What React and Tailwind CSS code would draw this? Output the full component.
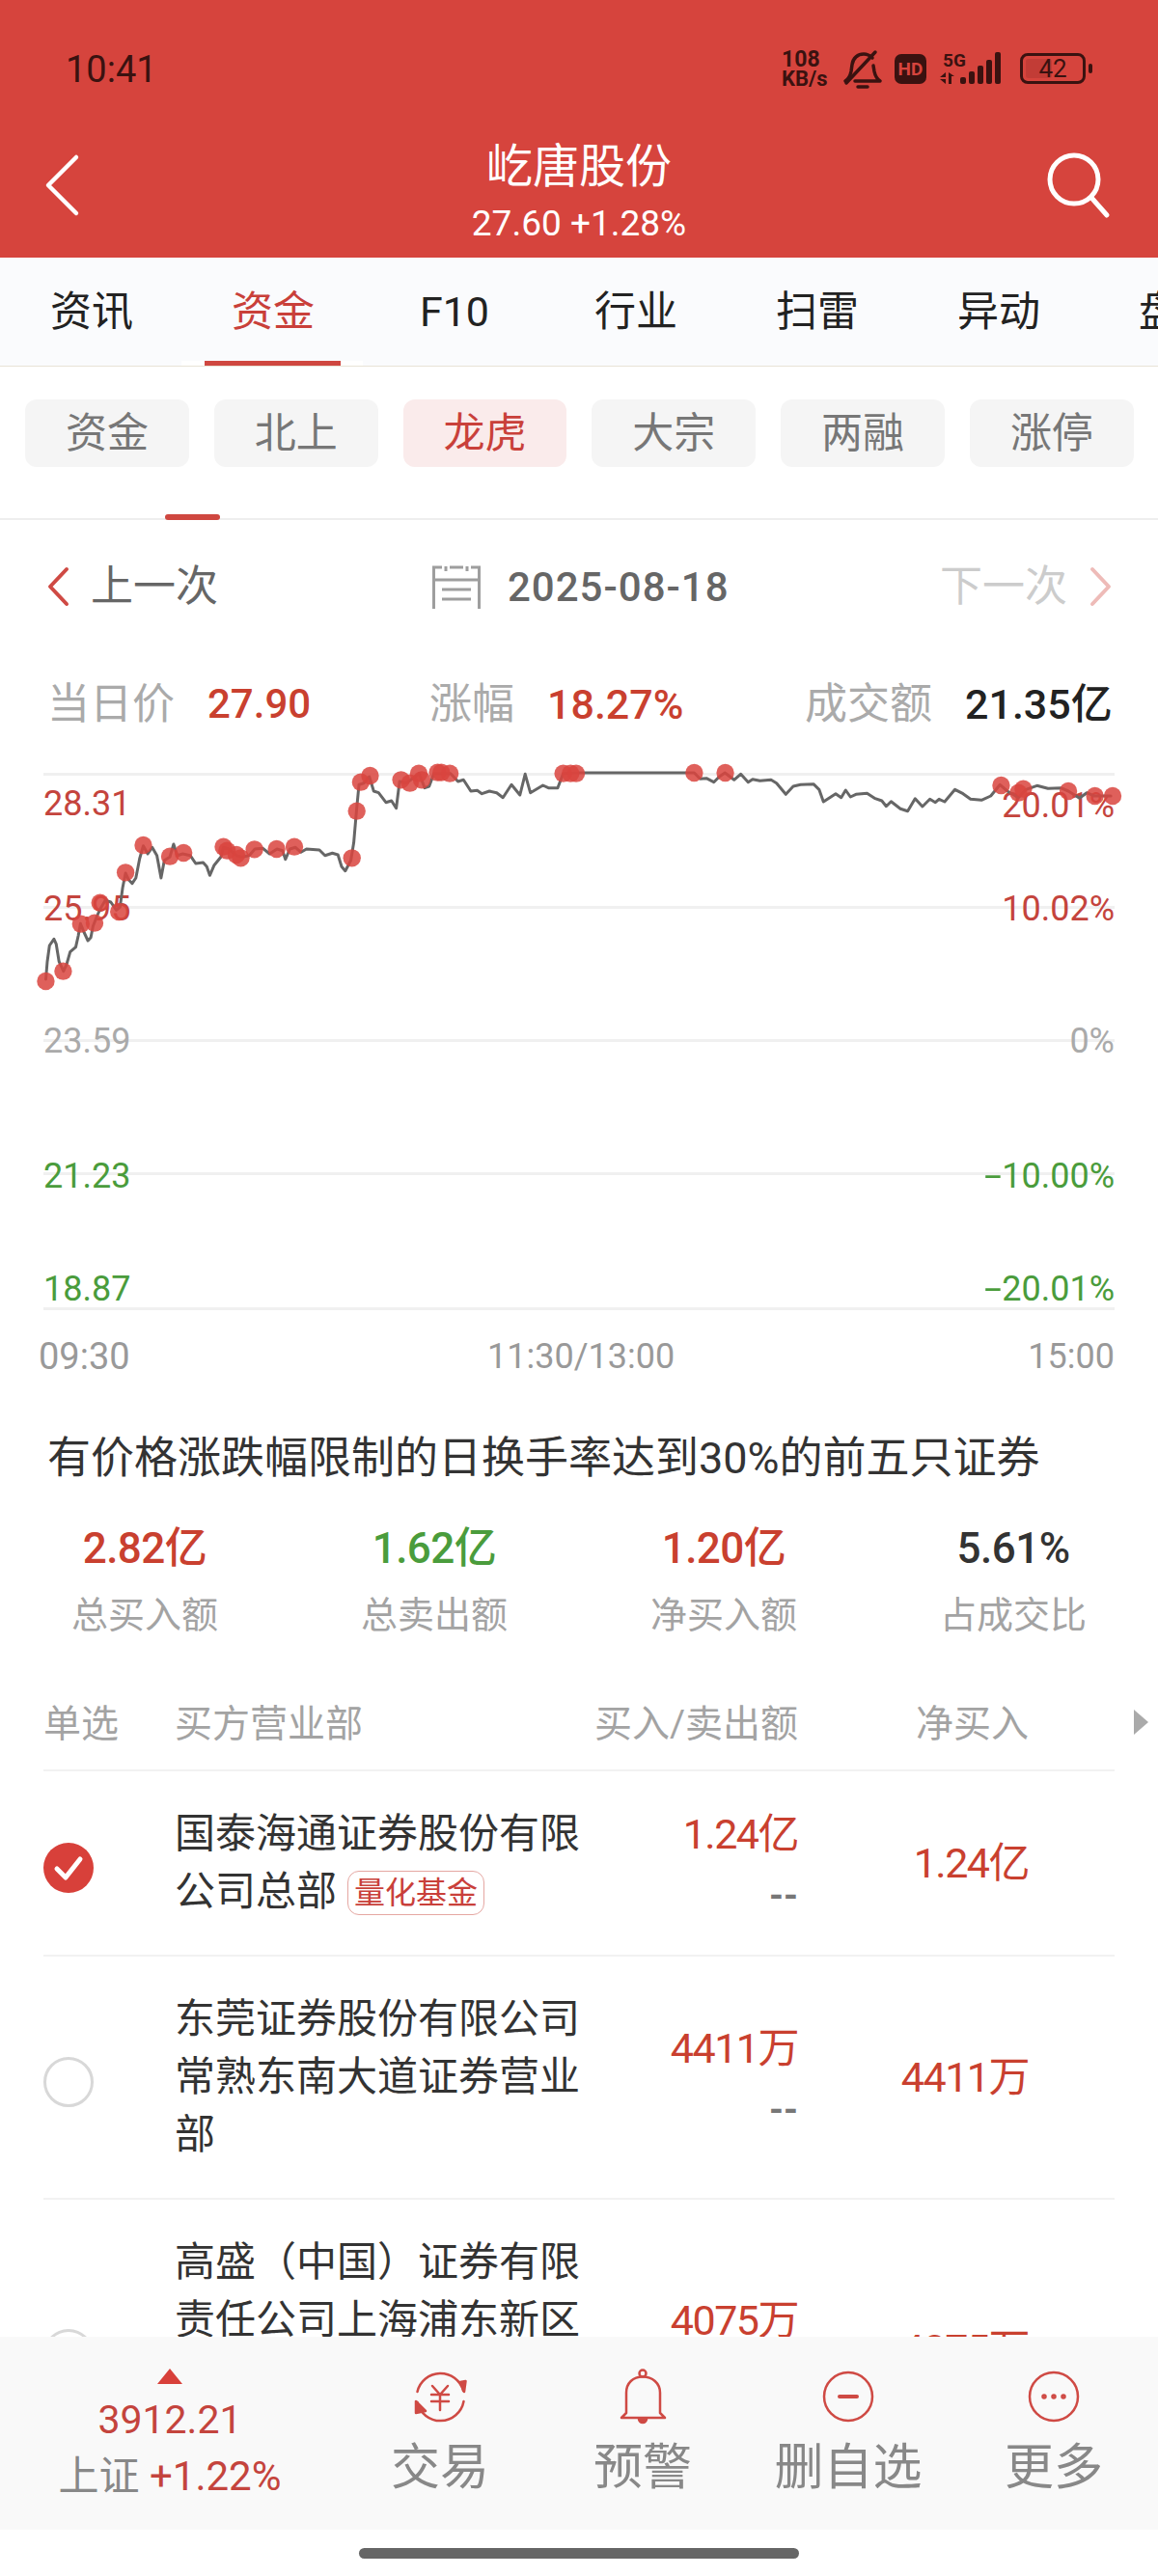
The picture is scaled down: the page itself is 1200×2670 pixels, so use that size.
import { Fragment } from "react";

const cjk = "font-['Roboto','Noto_Sans_CJK_SC',sans-serif]";

// chart points are read off in zoomed coords, left half and right half
const leftLine = [[124,735],[128,680],[134,630],[146,610],[152,625],[160,680],[172,710],[180,690],[190,650],[205,635],[212,600],[218,562],[226,585],[238,615],[246,605],[252,570],[262,540],[272,515],[285,490],[300,495],[315,520],[325,510],[332,450],[340,405],[348,425],[358,437],[368,420],[378,360],[388,320],[400,345],[412,325],[425,350],[436,420],[445,365],[460,355],[470,315],[480,350],[495,345],[515,350],[530,375],[550,372],[560,385],[568,412],[580,380],[598,355],[605,325],[620,330],[640,350],[655,355],[675,350],[690,330],[712,328],[730,345],[750,330],[765,335],[773,362],[785,330],[800,325],[815,340],[830,330],[865,333],[880,350],[900,343],[915,348],[925,385],[935,398],[950,365],[958,310],[965,215],[972,130],[985,125],[1000,105],[1012,150],[1025,155],[1045,185],[1060,180],[1073,203],[1082,120],[1100,125],[1135,95],[1150,140],[1162,135],[1175,95],[1220,95],[1240,120],[1255,115],[1275,150],[1292,148],[1305,158],[1325,150],[1345,155],[1362,170],[1385,130],[1408,162],[1422,97],[1436,155],[1470,132],[1485,140],[1510,140],[1525,95],[1568,93]];
const rightLine = [[0,93],[312,93],[328,112],[345,110],[365,122],[380,105],[395,93],[420,115],[438,97],[458,122],[470,113],[490,118],[520,115],[535,125],[560,160],[580,135],[600,130],[635,128],[650,145],[662,183],[695,158],[710,170],[722,147],[735,168],[750,160],[780,157],[800,172],[820,180],[832,197],[845,182],[870,205],[890,212],[910,173],[930,198],[950,175],[965,185],[975,175],[990,183],[1018,145],[1040,158],[1060,175],[1090,178],[1115,165],[1140,130],[1160,150],[1190,170],[1210,145],[1240,133],[1270,142],[1305,140],[1325,150],[1355,172],[1375,155],[1395,165],[1440,165]];
const leftDots = [[124,741],[171,710],[219,563],[256,560],[271,497],[322,525],[340,403],[388,318],[460,353],[497,342],[605,323],[615,335],[640,348],[652,358],[689,331],[749,330],[797,323],[953,358],[966,212],[977,122],[1002,102],[1086,115],[1110,125],[1134,95],[1142,115],[1185,92],[1195,92],[1218,95],[1525,95],[1545,95],[1560,95]];
const rightDots = [[312,93],[396,93],[1143,132],[1190,155],[1203,143],[1325,150],[1397,165],[1445,165]];

const toLeft = ([x, y]) => [x / 2.613, 770 + y / 3 - 783];
const toRight = ([x, y]) => [600 + x / 2.613, 770 + y / 3 - 783];

const linePts = [...leftLine.map(toLeft), ...rightLine.map(toRight)]
  .map((p) => p[0].toFixed(1) + "," + p[1].toFixed(1))
  .join(" ");
const dots = [...leftDots.map(toLeft), ...rightDots.map(toRight)];

const tabs = ["资讯", "资金", "F10", "行业", "扫雷", "异动", "盘口"];
const pills = ["资金", "北上", "龙虎", "大宗", "两融", "涨停"];
const summary = [
  { value: "2.82亿", label: "总买入额", color: "text-[#c9402f]" },
  { value: "1.62亿", label: "总卖出额", color: "text-[#4a9c3c]" },
  { value: "1.20亿", label: "净买入额", color: "text-[#c9402f]" },
  { value: "5.61%", label: "占成交比", color: "text-[#333333]" },
];

function StatusBar() {
  return (
    <div className="h-[134px] flex items-start justify-between pt-[50px] pl-[68px] pr-[75px] text-[#3a1210]">
      <span className="text-[38px] leading-[44px]">10:41</span>
      <div className="flex items-start">
        <div className="w-[62px] pt-[2px] font-bold">
          <div className="text-[23px] leading-[20px]">108</div>
          <div className="text-[22px] leading-[20px]">KB/s</div>
        </div>
        <svg width="44" height="44" viewBox="0 0 44 44" className="mt-[1px]" fill="none" stroke="#3a1210" strokeWidth="3.5" strokeLinecap="round" strokeLinejoin="round">
          <path d="M4 33c3-2 5-5 6-10l1-7c1-7 6-11 12-11 4 0 7 2 9 4M33 17l1 6c1 5 3 8 6 10H14" />
          <path d="M5 35 35 3" />
          <path d="M17 39h10" />
        </svg>
        <div className="ml-[11px] mt-[6px] w-[33px] h-[31px] rounded-[7px] bg-[#3a1210] text-[#d6443d] text-[19px] font-bold leading-[31px] text-center">HD</div>
        <div className="ml-[13px] mt-[4px] w-[70px] relative h-[36px]">
          <span className="absolute left-[4px] -top-[1px] text-[19px] leading-[20px] font-bold">5G</span>
          <svg width="70" height="36" viewBox="0 0 70 36" fill="#3a1210">
            <path d="M1 26h6v-5zM1 28h6v5zM10 21v12h3v-8h3z" />
            <rect x="22" y="26" width="6" height="7" rx="2" />
            <rect x="31" y="20" width="6" height="13" rx="2" />
            <rect x="40" y="14" width="6" height="19" rx="2" />
            <rect x="49" y="8" width="6" height="25" rx="2" />
            <rect x="58" y="0" width="6" height="33" rx="2" />
          </svg>
        </div>
        <div className="ml-[14px] mt-[5px] relative w-[68px] h-[32px] rounded-[8px] border-[3px] border-[#3a1210] p-[3px]">
          <div className="h-full w-[27px] rounded-[3px] bg-[#c23c36]"></div>
          <span className="absolute inset-0 text-center text-[26px] leading-[26px] text-[#3a1210]">42</span>
          <div className="absolute -right-[10px] top-[8px] w-[4px] h-[10px] rounded-[2px] bg-[#3a1210]"></div>
        </div>
      </div>
    </div>
  );
}

function Header() {
  return (
    <div className="h-[133px] relative flex flex-col items-center text-white">
      <div className="h-[76px] mt-[1px] text-[48px] leading-[76px]">屹唐股份</div>
      <div className="text-[37px] leading-[44px] -mt-[1px]">27.60 +1.28%</div>
      <svg className="absolute left-[44px] top-[25px]" width="40" height="66" viewBox="0 0 40 66" fill="none" stroke="white" strokeWidth="4.5" strokeLinecap="round" strokeLinejoin="round">
        <path d="M35 4 6 33l29 29" />
      </svg>
      <svg className="absolute left-[1082px] top-[22px]" width="72" height="72" viewBox="0 0 72 72" fill="none" stroke="white" strokeWidth="5" strokeLinecap="round">
        <circle cx="31" cy="30" r="25" />
        <path d="M50 50 65 67" />
      </svg>
    </div>
  );
}

function Tabs() {
  return (
    <div className="h-[113px] bg-[#fafbfd] border-b border-[#e8e3d6] flex overflow-hidden pl-[1px]">
      {tabs.map((t, i) => (
        <div key={t} className={`relative shrink-0 w-[188px] h-[112px] text-center text-[43px] leading-[112px] ${i === 1 ? "text-[#c9403a]" : "text-[#222222]"}`}>
          {t}
          {i === 1 && (
            <div className="absolute left-[-1px] bottom-[-1px] w-[188px] h-[6px] bg-white flex justify-center">
              <div className="w-[141px] h-[5px] bg-[#cf4740]"></div>
            </div>
          )}
        </div>
      ))}
    </div>
  );
}

function Pills() {
  return (
    <div className="relative h-[159px] border-b-2 border-[#eeeeee] pt-[34px] pl-[26px] flex gap-[26px] items-start">
      {pills.map((p, i) => (
        <div key={p} className={`w-[169.8px] h-[70px] rounded-[12px] text-center text-[43px] leading-[70px] ${i === 2 ? "bg-[#faebeb] text-[#c9403a]" : "bg-[#f5f5f5] text-[#777777]"}`}>
          {p}
        </div>
      ))}
      <div className="absolute left-[171px] bottom-[-2px] w-[57px] h-[6px] rounded-full bg-[#cf4740]"></div>
    </div>
  );
}

function DateRow() {
  return (
    <div className="h-[138px] flex items-center px-[47px] relative">
      <svg width="26" height="42" viewBox="0 0 26 42" fill="none" stroke="#cf4a44" strokeWidth="4" strokeLinecap="round" strokeLinejoin="round">
        <path d="M22 3 5 21l17 18" />
      </svg>
      <span className="ml-[21px] text-[44px] text-[#666666]">上一次</span>
      <svg className="ml-[221px]" width="52" height="46" viewBox="0 0 52 46" fill="none" stroke="#9e9e9e" strokeWidth="3">
        <path d="M2.5 46V3H11M19 3h14M41 3h8.5v43M15 2v5M37 2v5M2.5 16h47" />
        <path d="M11 26h30M11 36h30" />
      </svg>
      <span className="ml-[27px] text-[42px] font-medium text-[#666666] tracking-[1px]">2025-08-18</span>
      <span className="absolute left-[974px] text-[44px] text-[#cccccc]">下一次</span>
      <svg className="absolute left-[1128px]" width="26" height="42" viewBox="0 0 26 42" fill="none" stroke="#eebbb8" strokeWidth="4" strokeLinecap="round" strokeLinejoin="round">
        <path d="M4 3l17 18L4 39" />
      </svg>
    </div>
  );
}

function PriceRow() {
  return (
    <div className="h-[106px] relative text-[44px] leading-[106px]">
      <span className="absolute left-[49px] text-[#aaaaaa]">当日价</span>
      <span className="absolute left-[215px] text-[42px] font-medium text-[#c9402f]">27.90</span>
      <span className="absolute left-[445px] text-[#aaaaaa]">涨幅</span>
      <span className="absolute left-[567px] text-[43px] font-medium text-[#c9402f]">18.27%</span>
      <span className="absolute left-[834px] text-[#aaaaaa]">成交额</span>
      <span className="absolute left-[1000px] text-[43px] font-medium text-[#222222]">21.35亿</span>
    </div>
  );
}

function Minus() {
  return <span className="inline-block w-[22px] text-right origin-right scale-x-[1.8]">-</span>;
}

function Chart() {
  const gridY = [19, 157, 295, 433, 573];
  const labelClass = "absolute text-[36px] leading-[44px]";
  return (
    <div className="h-[647px] relative">
      {gridY.map((y) => (
        <div key={y} className="absolute left-[45px] w-[1110px] h-[3px] bg-[#f0f0f0]" style={{ top: y - 1 }}></div>
      ))}
      <span className={`${labelClass} left-[45px] top-[28px] text-[#c4443d]`}>28.31</span>
      <span className={`${labelClass} left-[45px] top-[137px] text-[#c4443d]`}>25.95</span>
      <span className={`${labelClass} left-[45px] top-[274px] text-[#aaaaaa]`}>23.59</span>
      <span className={`${labelClass} left-[45px] top-[414px] text-[#4a9c3c]`}>21.23</span>
      <span className={`${labelClass} left-[45px] top-[531px] text-[#4a9c3c]`}>18.87</span>
      <span className={`${labelClass} right-[45px] top-[30px] text-[#c4443d]`}>20.01%</span>
      <span className={`${labelClass} right-[45px] top-[137px] text-[#c4443d]`}>10.02%</span>
      <span className={`${labelClass} right-[45px] top-[274px] text-[#aaaaaa]`}>0%</span>
      <span className={`${labelClass} right-[45px] top-[414px] text-[#4a9c3c]`}><Minus />10.00%</span>
      <span className={`${labelClass} right-[45px] top-[531px] text-[#4a9c3c]`}><Minus />20.01%</span>
      <span className={`${labelClass} left-[40px] top-[601px] text-[38px] text-[#999999]`}>09:30</span>
      <span className={`${labelClass} left-[505px] top-[601px] text-[#999999]`}>11:30/13:00</span>
      <span className={`${labelClass} right-[45px] top-[601px] text-[#999999]`}>15:00</span>
      <svg className="absolute left-0 top-0" width="1200" height="400" viewBox="0 0 1200 400" fill="none">
        <polyline points={linePts} stroke="#666666" strokeWidth="3" strokeLinejoin="round" strokeLinecap="round" />
        {dots.map((d, i) => (
          <circle key={i} cx={d[0]} cy={d[1]} r="9.2" fill="#d9443e" fillOpacity="0.85" />
        ))}
      </svg>
    </div>
  );
}

function Summary() {
  return (
    <Fragment>
      <div className="mt-[52px] h-[60px] pl-[49px] text-[45px] leading-[60px] text-[#333333]">
        有价格涨跌幅限制的日换手率达到30%的前五只证券
      </div>
      <div className="mt-[33px] flex">
        {summary.map((s) => (
          <div key={s.label} className="w-[300px] text-center">
            <div className={`h-[60px] text-[44px] leading-[60px] tracking-[-0.5px] font-medium ${s.color}`}>{s.value}</div>
            <div className="mt-[14px] h-[50px] text-[38px] leading-[50px] text-[#a3a3a3]">{s.label}</div>
          </div>
        ))}
      </div>
    </Fragment>
  );
}

function TableHead() {
  return (
    <div className="mt-[39px] mx-[45px] h-[98px] pt-[2px] border-b-2 border-[#f2f2f2] flex items-center text-[39px] text-[#a3a3a3] relative">
      <span className="w-[136px]">单选</span>
      <span className="w-[425px]">买方营业部</span>
      <span className="w-[221px] text-right whitespace-nowrap">买入/卖出额</span>
      <span className="w-[239px] text-right">净买入</span>
      <div className="absolute left-[1130px] top-[34px] w-0 h-0 border-y-[13px] border-y-transparent border-l-[15px] border-l-[#aaaaaa]"></div>
    </div>
  );
}

function Row({ name, tag, buy, net, checked, h, nameTop }) {
  return (
    <div className={`${h} mx-[45px] border-b-2 border-[#f2f2f2] flex items-center`}>
      <div className="w-[136px] mt-[10px]">
        {checked ? (
          <svg width="52" height="52" viewBox="0 0 52 52">
            <circle cx="26" cy="26" r="26" fill="#d8403a" />
            <path d="M14 27l9 9 15-19" fill="none" stroke="white" strokeWidth="5" strokeLinecap="round" strokeLinejoin="round" />
          </svg>
        ) : (
          <div className="w-[52px] h-[52px] rounded-full border-[3px] border-[#d8d8d8]"></div>
        )}
      </div>
      <div className={`w-[425px] shrink-0 pr-[3px] text-[42px] leading-[60px] text-[#333333] ${nameTop ? "self-start pt-[35px]" : ""}`}>
        {name}
        {tag && (
          <span className="inline-block align-[2px] ml-[11px] w-[142px] h-[46px] rounded-[12px] border border-[#e5a7a2] text-center text-[32px] leading-[44px] text-[#c9403a]">
            {tag}
          </span>
        )}
      </div>
      <div className="w-[221px] text-right mt-[3px]">
        <div className="h-[60px] text-[43px] leading-[60px] tracking-[-1.5px] text-[#c9402f]">{buy}</div>
        <div className="h-[64px] text-[38px] leading-[68px] font-bold text-[#777777]">--</div>
      </div>
      <div className="w-[239px] text-right text-[43px] leading-[60px] tracking-[-1.5px] text-[#c9402f]">{net}</div>
    </div>
  );
}

function BarItem({ width, label, children }) {
  return (
    <div className={`${width} flex flex-col items-center`}>
      <svg className="mt-[32px]" width="60" height="60" viewBox="0 0 60 60" fill="none" stroke="#cf4a44" strokeWidth="2.5" strokeLinecap="round" strokeLinejoin="round">
        {children}
      </svg>
      <div className="mt-[9px] text-[51px] leading-[70px] text-[#888888]">{label}</div>
    </div>
  );
}

function BottomBar() {
  return (
    <div className="absolute left-0 bottom-0 w-full h-[248px] bg-white">
      <div className="h-[200px] bg-[#f9f9f9] flex">
        <div className="w-[352px] flex flex-col items-center">
          <div className="mt-[33px] w-0 h-0 border-x-[13px] border-x-transparent border-b-[16px] border-b-[#d8403a]"></div>
          <div className="mt-[11px] text-[41px] leading-[52px] text-[#c4443d]">3912.21</div>
          <div className="mt-[3px] text-[42px] leading-[60px] text-[#888888]">
            上证 <span className="text-[#c4443d]">+1.22%</span>
          </div>
        </div>
        <BarItem width="w-[208px]" label="交易">
          <path d="M6.5 25A24.5 24.5 0 0 1 54 24M54.500 35A24.5 24.5 0 0 1 6.5 36" />
          <path d="M55 25l-4-10 5.500-1zM5 35l0 12 10-2z" fill="#cf4a44" />
          <path d="M22 19l8 9 8-9M21 28h18M21 35h18M30 28v16" />
        </BarItem>
        <BarItem width="w-[212px]" label="预警">
          <circle cx="30" cy="6" r="3.5" />
          <path d="M13 47V26C13 16 20 9.500 30 9.500S48 16 48 26V47l5 5H8z" />
          <path d="M26 53h8a4 4 0 0 1-8 0z" fill="#cf4a44" />
        </BarItem>
        <BarItem width="w-[214px]" label="删自选">
          <circle cx="30" cy="30" r="25" />
          <path d="M21 30h18" strokeWidth="4" />
        </BarItem>
        <BarItem width="w-[212px]" label="更多">
          <circle cx="30" cy="30" r="25" />
          <circle cx="20" cy="30" r="1.5" />
          <circle cx="30" cy="30" r="1.5" />
          <circle cx="40" cy="30" r="1.5" />
        </BarItem>
      </div>
      <div className="mt-[19px] ml-[372px] w-[456px] h-[11px] rounded-full bg-[#666666]"></div>
    </div>
  );
}

export default function App() {
  return (
    <div className={`relative w-[1200px] h-[2670px] overflow-hidden bg-white ${cjk}`}>
      <div className="bg-[#d6443d]">
        <StatusBar />
        <Header />
      </div>
      <Tabs />
      <Pills />
      <DateRow />
      <PriceRow />
      <Chart />
      <Summary />
      <TableHead />
      <Row
        h="h-[192px]"
        name="国泰海通证券股份有限公司总部"
        tag="量化基金"
        buy="1.24亿"
        net="1.24亿"
        checked
      />
      <Row h="h-[252px]" name="东莞证券股份有限公司常熟东南大道证券营业部" buy="4411万" net="4411万" />
      <Row h="h-[312px]" name="高盛（中国）证券有限责任公司上海浦东新区" buy="4075万" net="4075万" nameTop />
      <BottomBar />
    </div>
  );
}
